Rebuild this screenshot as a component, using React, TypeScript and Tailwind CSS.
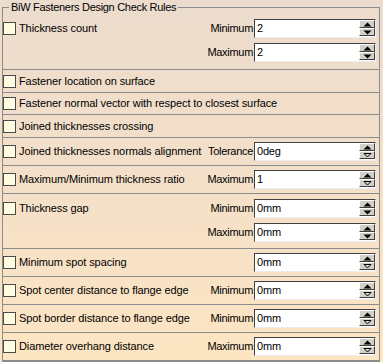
type Field = { label: string; value: string };

type Rule = {
  name: string;
  height: string;
  fields: Field[];
  filled?: boolean;
};

const rules: Rule[] = [
  {
    name: 'Thickness count',
    height: 'h-[56px]',
    fields: [
      { label: 'Minimum', value: '2' },
      { label: 'Maximum', value: '2' },
    ],
    filled: true,
  },
  { name: 'Fastener location on surface', height: 'h-[23px]', fields: [] },
  { name: 'Fastener normal vector with respect to closest surface', height: 'h-[22px]', fields: [] },
  { name: 'Joined thicknesses crossing', height: 'h-[23px]', fields: [] },
  { name: 'Joined thicknesses normals alignment', height: 'h-[28px]', fields: [{ label: 'Tolerance', value: '0deg' }] },
  { name: 'Maximum/Minimum thickness ratio', height: 'h-[28px]', fields: [{ label: 'Maximum', value: '1' }] },
  {
    name: 'Thickness gap',
    height: 'h-[55px]',
    fields: [
      { label: 'Minimum', value: '0mm' },
      { label: 'Maximum', value: '0mm' },
    ],
    filled: true,
  },
  { name: 'Minimum spot spacing', height: 'h-[28px]', fields: [{ label: '', value: '0mm' }] },
  { name: 'Spot center distance to flange edge', height: 'h-[28px]', fields: [{ label: 'Minimum', value: '0mm' }] },
  { name: 'Spot border distance to flange edge', height: 'h-[28px]', fields: [{ label: 'Minimum', value: '0mm' }] },
  { name: 'Diameter overhang distance', height: 'h-[28px]', fields: [{ label: 'Maximum', value: '0mm' }] },
];

function ArrowButton({ up, filled }: { up?: boolean; filled?: boolean }) {
  return (
    <div className="flex h-[8px] w-[16px] items-center justify-center border border-t-white border-l-white border-r-[#404040] border-b-[#404040] bg-[#d4d0c8]">
      <svg width="9" height="5" viewBox="0 0 9 5">
        {up ? (
          <path d="M0.5 4.5 L4.5 0.5 L8.5 4.5 Z" fill="#000" />
        ) : filled ? (
          <path d="M0.5 0.5 L4.5 4.5 L8.5 0.5 Z" fill="#000" />
        ) : (
          <path d="M1 0.5 L4.5 4 L8 0.5 Z" fill="none" stroke="#000" strokeWidth="1" />
        )}
      </svg>
    </div>
  );
}

function Spinner({ value, filled }: { value: string; filled?: boolean }) {
  return (
    <div className="flex h-[19px] w-[122px] border border-t-[#404040] border-l-[#404040] border-r-[#ececec] border-b-[#ececec] bg-white">
      <div className="flex-1 pl-[2px] leading-[17px] tracking-[-0.2px]">{value}</div>
      <div className="flex flex-col">
        <ArrowButton up />
        <ArrowButton filled={filled} />
      </div>
    </div>
  );
}

function CheckBox() {
  return <div className="h-[13px] w-[13px] shrink-0 border border-[#4a4a4a] bg-[#fffde0]" />;
}

function RuleRow({ rule }: { rule: Rule }) {
  const multi = rule.fields.length > 1;
  return (
    <div
      className={`flex justify-between border-b border-[#8c8c8c] pr-[3px] ${rule.height} ${
        multi ? 'items-start pt-[5px]' : 'items-center'
      }`}
    >
      <div className="flex h-[19px] items-center gap-[3px]">
        <CheckBox />
        <span className="tracking-[-0.1px]">{rule.name}</span>
      </div>
      {rule.fields.length > 0 && (
        <div className="flex flex-col items-end gap-[5px]">
          {rule.fields.map((f, i) => (
            <div key={i} className="flex items-center gap-[1px]">
              <span className="tracking-[-0.3px]">{f.label}</span>
              <Spinner value={f.value} filled={rule.filled} />
            </div>
          ))}
        </div>
      )}
    </div>
  );
}

export default function App() {
  return (
    <div
      className="h-[362px] w-[383px] overflow-hidden bg-linear-to-b from-[#ecdccd] via-[#f4e0c9] to-[#fde5c2] pl-[2px] pr-[3px] text-[11px] text-black"
      style={{ fontFamily: '"Liberation Sans", Arial, sans-serif' }}
    >
      {/* Group frame title */}
      <div className="flex h-[14px] items-start">
        <div className="mt-[7px] h-[7px] w-[7px] border-t border-l border-[#8c8c8c]" />
        <span className="px-[2px] leading-[14px] tracking-[-0.3px]">BiW Fasteners Design Check Rules</span>
        <div className="mt-[7px] h-[7px] flex-1 border-t border-r border-[#8c8c8c]" />
      </div>

      {/* Rules */}
      <div className="flex flex-col border-x border-b border-[#8c8c8c]">
        {rules.map((r) => (
          <RuleRow key={r.name} rule={r} />
        ))}
      </div>
    </div>
  );
}
